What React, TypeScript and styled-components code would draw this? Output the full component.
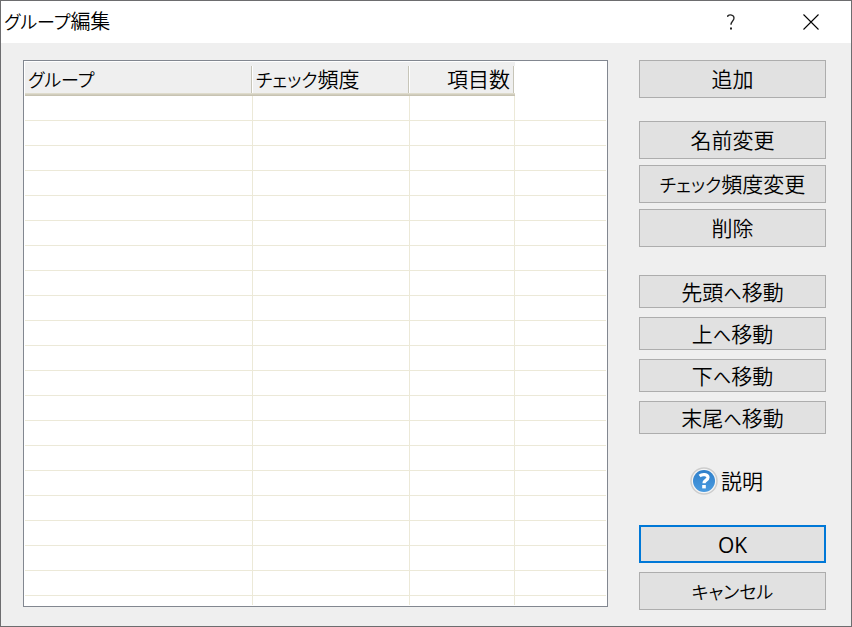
import React from "react";
import styled, { createGlobalStyle } from "styled-components";

const GlobalStyle = createGlobalStyle`
  * { box-sizing: border-box; }
  body { margin: 0; }
  body, button {
    color: #000;
    font-family: "Noto Sans CJK JP DemiLight", "Noto Sans CJK JP", sans-serif;
    font-size: 21px;
    font-weight: 350;
    line-height: 30px;
    font-feature-settings: "palt";
  }
`;

const Dialog = styled.div`
  display: flex;
  flex-direction: column;
  height: 100vh;
  min-height: 600px;
  min-width: 600px;
  border: 1px solid #6d6d6f;
  background: #efefef;
`;

const TitleBar = styled.header`
  display: flex;
  align-items: center;
  flex: none;
  height: 42px;
  padding-left: 3px;
  background: #fff;
`;

const Title = styled.h1`
  flex: 1;
  margin: 0;
  padding-bottom: 2px;
  font-size: 20px;
  font-weight: 350;
`;

const CaptionButton = styled.button`
  display: flex;
  align-items: center;
  justify-content: center;
  width: 80px;
  height: 42px;
  padding: 0;
  border: 0;
  background: transparent;
`;

const Body = styled.main`
  display: flex;
  flex: 1;
  gap: 31px;
  min-height: 0;
  padding: 17px 25px 16px 22px;
`;

const ListBox = styled.div`
  flex: 1;
  min-width: 0;
  margin-bottom: 3px;
  padding: 1px;
  border: 1px solid #828790;
  background: #fff;
`;

const ListClip = styled.div`
  height: 100%;
  overflow: hidden;
`;

const Table = styled.table`
  width: 100%;
  table-layout: fixed;
  border-collapse: separate;
  border-spacing: 0;
`;

const Column = styled.col<{ $width?: number }>`
  width: ${(p) => (p.$width ? `${p.$width}px` : "auto")};
`;

const HeadCell = styled.th`
  height: 34px;
  padding: 4px 1px 2px 0;
  border-bottom: 1px solid #c7c3b2;
  background: #efefef;
  box-shadow: inset 0 -1px #d1cdbd, inset 0 -2px #dedbcc;
  font-weight: 350;
`;

const HeadLabel = styled.div<{ $end?: boolean }>`
  height: 27px;
  padding: 0 3px;
  border-right: 1px solid #c7c5b8;
  box-shadow: 1px 0 #fff;
  line-height: 24px;
  text-align: ${(p) => (p.$end ? "right" : "left")};
  white-space: nowrap;
`;

const Cell = styled.td<{ $open?: boolean }>`
  height: 25px;
  padding: 0;
  border-bottom: 1px solid #ece9d8;
  border-right: ${(p) => (p.$open ? "0" : "1px solid #ece9d8")};
`;

const Actions = styled.div`
  display: flex;
  flex-direction: column;
  flex: none;
  width: 187px;
`;

const Group = styled.div<{ $gap: number; $before?: number }>`
  display: flex;
  flex-direction: column;
  gap: ${(p) => p.$gap}px;
  margin-top: ${(p) => p.$before ?? 0}px;
`;

const BottomGroup = styled(Group)`
  margin-top: auto;
`;

const ActionButton = styled.button<{ $short?: boolean; $primary?: boolean }>`
  flex: none;
  height: ${(p) => (p.$short ? 33 : 38)}px;
  padding: ${(p) => (p.$primary ? "0" : "0 0 2px")};
  border: ${(p) => (p.$primary ? "2px solid #0078d7" : "1px solid #adadad")};
  background: #e1e1e1;
  white-space: nowrap;
`;

const Latin = styled.span`
  font-family: "Open Sans", sans-serif;
  font-weight: 400;
`;

const Kana = styled.span`
  font-size: 18px;
`;

const HelpButton = styled.button`
  display: flex;
  align-items: center;
  align-self: center;
  gap: 3px;
  height: 30px;
  margin: 32px 12px 0 0;
  padding: 0;
  border: 0;
  background: transparent;
`;

const HelpText = styled.span`
  padding-bottom: 2px;
`;

const HelpIcon = () => (
  <svg width="28" height="28" viewBox="0 0 28 28" aria-hidden="true">
    <defs>
      <linearGradient id="helpBlue" x1="0" y1="0" x2="0" y2="1">
        <stop offset="0" stopColor="#2f7fca" />
        <stop offset="1" stopColor="#4a9be0" />
      </linearGradient>
    </defs>
    <circle cx="14" cy="14" r="13" fill="#f5f5f5" stroke="#cdcdcd" strokeWidth="1.5" />
    <circle cx="14" cy="14" r="11" fill="url(#helpBlue)" />
    <path d="M9.6 8.9 C12 7 18 6.9 18 10.6 C18 13.2 14 13.2 14 16.2" fill="none" stroke="#fff" strokeWidth="3.2" />
    <rect x="12.2" y="18" width="3.6" height="3.4" fill="#fff" />
  </svg>
);

const rows = Array.from({ length: 21 }, (_, i) => i);

export default function App() {
  return (
    <>
      <GlobalStyle />
      <Dialog role="dialog" aria-labelledby="dialog-title">
        <TitleBar>
          <Title id="dialog-title"><Kana>グループ</Kana>編集</Title>
          <CaptionButton type="button" aria-label="ヘルプ">
            <svg width="10" height="16" viewBox="0 0 10 16" aria-hidden="true">
              <path d="M1.8 3 V1.8 C3.5 0.4 8 0.4 8 4 C8 7 5 7 5 10.8" fill="none" stroke="#222" strokeWidth="1.3" />
              <rect x="4" y="13.5" width="2" height="2" fill="#222" />
            </svg>
          </CaptionButton>
          <CaptionButton type="button" aria-label="閉じる">
            <svg width="16" height="16" viewBox="0 0 16 16" aria-hidden="true">
              <path d="M0.5 0.5 L15.5 15.5 M15.5 0.5 L0.5 15.5" stroke="#000" strokeWidth="1.1" />
            </svg>
          </CaptionButton>
        </TitleBar>
        <Body>
          <ListBox>
            <ListClip>
              <Table>
                <colgroup>
                  <Column $width={228} />
                  <Column $width={157} />
                  <Column $width={105} />
                  <Column />
                </colgroup>
                <thead>
                  <tr>
                    <HeadCell scope="col"><HeadLabel><Kana>グループ</Kana></HeadLabel></HeadCell>
                    <HeadCell scope="col"><HeadLabel><Kana>チェック</Kana>頻度</HeadLabel></HeadCell>
                    <HeadCell scope="col"><HeadLabel $end>項目数</HeadLabel></HeadCell>
                    <td />
                  </tr>
                </thead>
                <tbody>
                  {rows.map((row) => (
                    <tr key={row}>
                      <Cell />
                      <Cell />
                      <Cell />
                      <Cell $open />
                    </tr>
                  ))}
                </tbody>
              </Table>
            </ListClip>
          </ListBox>
          <Actions>
            <Group $gap={6}>
              <ActionButton type="button">追加</ActionButton>
            </Group>
            <Group $gap={6} $before={23}>
              <ActionButton type="button">名前変更</ActionButton>
              <ActionButton type="button"><Kana>チェック</Kana>頻度変更</ActionButton>
              <ActionButton type="button">削除</ActionButton>
            </Group>
            <Group $gap={9} $before={28}>
              <ActionButton type="button" $short>先頭<Kana>へ</Kana>移動</ActionButton>
              <ActionButton type="button" $short>上<Kana>へ</Kana>移動</ActionButton>
              <ActionButton type="button" $short>下<Kana>へ</Kana>移動</ActionButton>
              <ActionButton type="button" $short>末尾<Kana>へ</Kana>移動</ActionButton>
            </Group>
            <HelpButton type="button">
              <HelpIcon />
              <HelpText>説明</HelpText>
            </HelpButton>
            <BottomGroup $gap={9}>
              <ActionButton type="button" $primary><Latin>OK</Latin></ActionButton>
              <ActionButton type="button"><Kana>キャンセル</Kana></ActionButton>
            </BottomGroup>
          </Actions>
        </Body>
      </Dialog>
    </>
  );
}
